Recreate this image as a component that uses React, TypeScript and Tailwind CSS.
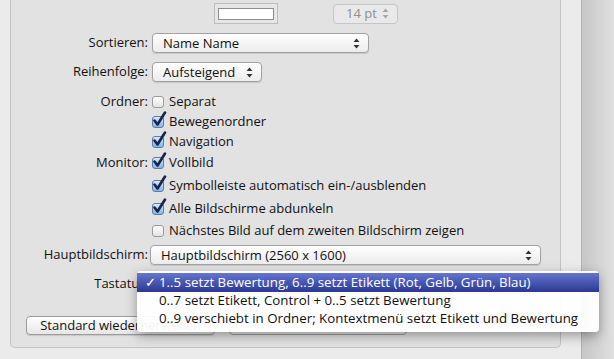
import React from "react"

const font = { fontFamily: '"Open Sans", "DejaVu Sans", sans-serif' }

function Arrows({ color = "#333" }: { color?: string }) {
  return (
    <svg width="7" height="11" viewBox="0 0 7 11" className="shrink-0">
      <path d="M3.5 0.5 L6.5 4 L0.5 4 Z" fill={color} />
      <path d="M3.5 10.5 L6.5 7 L0.5 7 Z" fill={color} />
    </svg>
  )
}

function Popup({ width, children }: { width: string; children?: React.ReactNode }) {
  return (
    <div
      className={`${width} h-[20px] flex items-center justify-between pl-[10px] pr-[8px] rounded-[4px] border border-[#a2a2a2] bg-gradient-to-b from-white to-[#ececec] shadow-[0_1px_1px_rgba(0,0,0,0.12)]`}
    >
      <span className="leading-none">{children}</span>
      <Arrows />
    </div>
  )
}

function Checkbox({ checked }: { checked?: boolean }) {
  return (
    <div className="relative w-[12px] h-[12px] shrink-0">
      <div
        className={`w-[12px] h-[12px] rounded-[3px] border ${
          checked
            ? "border-[#5a7ca5] bg-gradient-to-b from-[#d8ebfa] to-[#7fb5e6]"
            : "border-[#9b9b9b] bg-gradient-to-b from-white to-[#e4e4e4]"
        }`}
      />
      {checked && (
        <svg width="15" height="16" viewBox="0 0 15 16" className="absolute left-[0px] top-[-5px]">
          <path d="M2.5 9.5 L5.5 13.5 L13 1.5" fill="none" stroke="#16254d" strokeWidth="2.6" strokeLinecap="round" strokeLinejoin="round" />
        </svg>
      )}
    </div>
  )
}

function Row({ label, className = "", children }: { label?: string; className?: string; children: React.ReactNode }) {
  return (
    <div className={`flex items-center ${className}`}>
      <div className="w-[137px] text-right whitespace-nowrap">{label}</div>
      <div className="ml-[4px] flex items-center">{children}</div>
    </div>
  )
}

function Check({ label, checked, className = "", text }: { label?: string; checked?: boolean; className?: string; text: string }) {
  return (
    <Row label={label} className={`h-[20px] ${className}`}>
      <Checkbox checked={checked} />
      <span className="ml-[5px] whitespace-nowrap">{text}</span>
    </Row>
  )
}

export default function App() {
  return (
    <div className="relative w-[614px] h-[359px] overflow-hidden flex bg-[#ebebeb] text-[13px] text-[#111]" style={font}>
      {/* Einstellungen */}
      <div className="w-[581px] shrink-0">
        <div className="ml-[10px] w-[551px] h-[348px] pt-[3px] bg-[#e2e2e2] border-l border-r border-b border-[#c4c4c4] rounded-b-[5px]">
          <Row className="h-[21px]">
            <div className="ml-[62px] w-[64px] h-[21px] border border-[#bdbdbd] bg-[#e6e6e6] flex items-center justify-center">
              <div className="w-[56px] h-[12px] border border-[#8e8e8e] bg-white" />
            </div>
            <div className="ml-[55px] w-[65px] h-[20px] rounded-[4px] border border-[#c6c6c6] bg-[#e9e9e9] flex items-center justify-between pl-[12px] pr-[8px] text-[#8f8f8f]">
              <span className="leading-none">14 pt</span>
              <Arrows color="#a8a8a8" />
            </div>
          </Row>

          <Row label="Sortieren:" className="mt-[9px] h-[20px]">
            <Popup width="w-[217px]">Name Name</Popup>
          </Row>

          <Row label="Reihenfolge:" className="mt-[9px] h-[20px]">
            <Popup width="w-[110px]">Aufsteigend</Popup>
          </Row>

          <Check label="Ordner:" text="Separat" className="mt-[10px]" />
          <Check text="Bewegenordner" checked />
          <Check text="Navigation" checked />

          <Check label="Monitor:" text="Vollbild" checked className="mt-[1px]" />
          <Check text="Symbolleiste automatisch ein-/ausblenden" checked className="mt-[3px]" />
          <Check text="Alle Bildschirme abdunkeln" checked className="mt-[3px]" />
          <Check text="Nächstes Bild auf dem zweiten Bildschirm zeigen" className="mt-[2px]" />

          <Row label="Hauptbildschirm:" className="mt-[4px] h-[20px]">
            <div className="-ml-[2px]">
              <Popup width="w-[391px]">Hauptbildschirm (2560 x 1600)</Popup>
            </div>
          </Row>

          <Row label="Tastatur:" className="mt-[9px] h-[20px]">
            <Popup width="w-[391px]" />
          </Row>

          <div className="mt-[22px] pl-[15px] flex gap-[14px]">
            <div className="w-[189px] h-[19px] rounded-[4px] border border-[#9c9c9c] bg-gradient-to-b from-white to-[#e6e6e6] flex items-center justify-center whitespace-nowrap shadow-[0_1px_1px_rgba(0,0,0,0.12)]">
              Standard wiederherstellen
            </div>
            <div className="w-[178px] h-[19px] rounded-[4px] border border-[#9c9c9c] bg-gradient-to-b from-white to-[#e6e6e6]" />
          </div>
        </div>
      </div>

      {/* Fensterrand */}
      <div className="w-[1px] bg-[#b2b2b2]" />
      <div className="flex-1 bg-gradient-to-r from-[#c6c6c6] to-[#e0e0e0]" />

      {/* Aufgeklapptes Menü */}
      <div className="absolute left-[137px] top-[271px] w-[462px] h-[61px] pt-[2px] rounded-[4px] bg-white/95 shadow-[0_4px_12px_rgba(0,0,0,0.35)] whitespace-nowrap text-[13.3px]">
        <div className="h-[19px] flex items-center bg-gradient-to-b from-[#6675cf] to-[#2b3894] text-white">
          <span className="w-[22px] pl-[8px]">✓</span>
          <span>1..5 setzt Bewertung, 6..9 setzt Etikett (Rot, Gelb, Grün, Blau)</span>
        </div>
        <div className="h-[18px] flex items-center pl-[22px]">0..7 setzt Etikett, Control + 0..5 setzt Bewertung</div>
        <div className="h-[18px] flex items-center pl-[22px]">0..9 verschiebt in Ordner; Kontextmenü setzt Etikett und Bewertung</div>
      </div>
    </div>
  )
}
